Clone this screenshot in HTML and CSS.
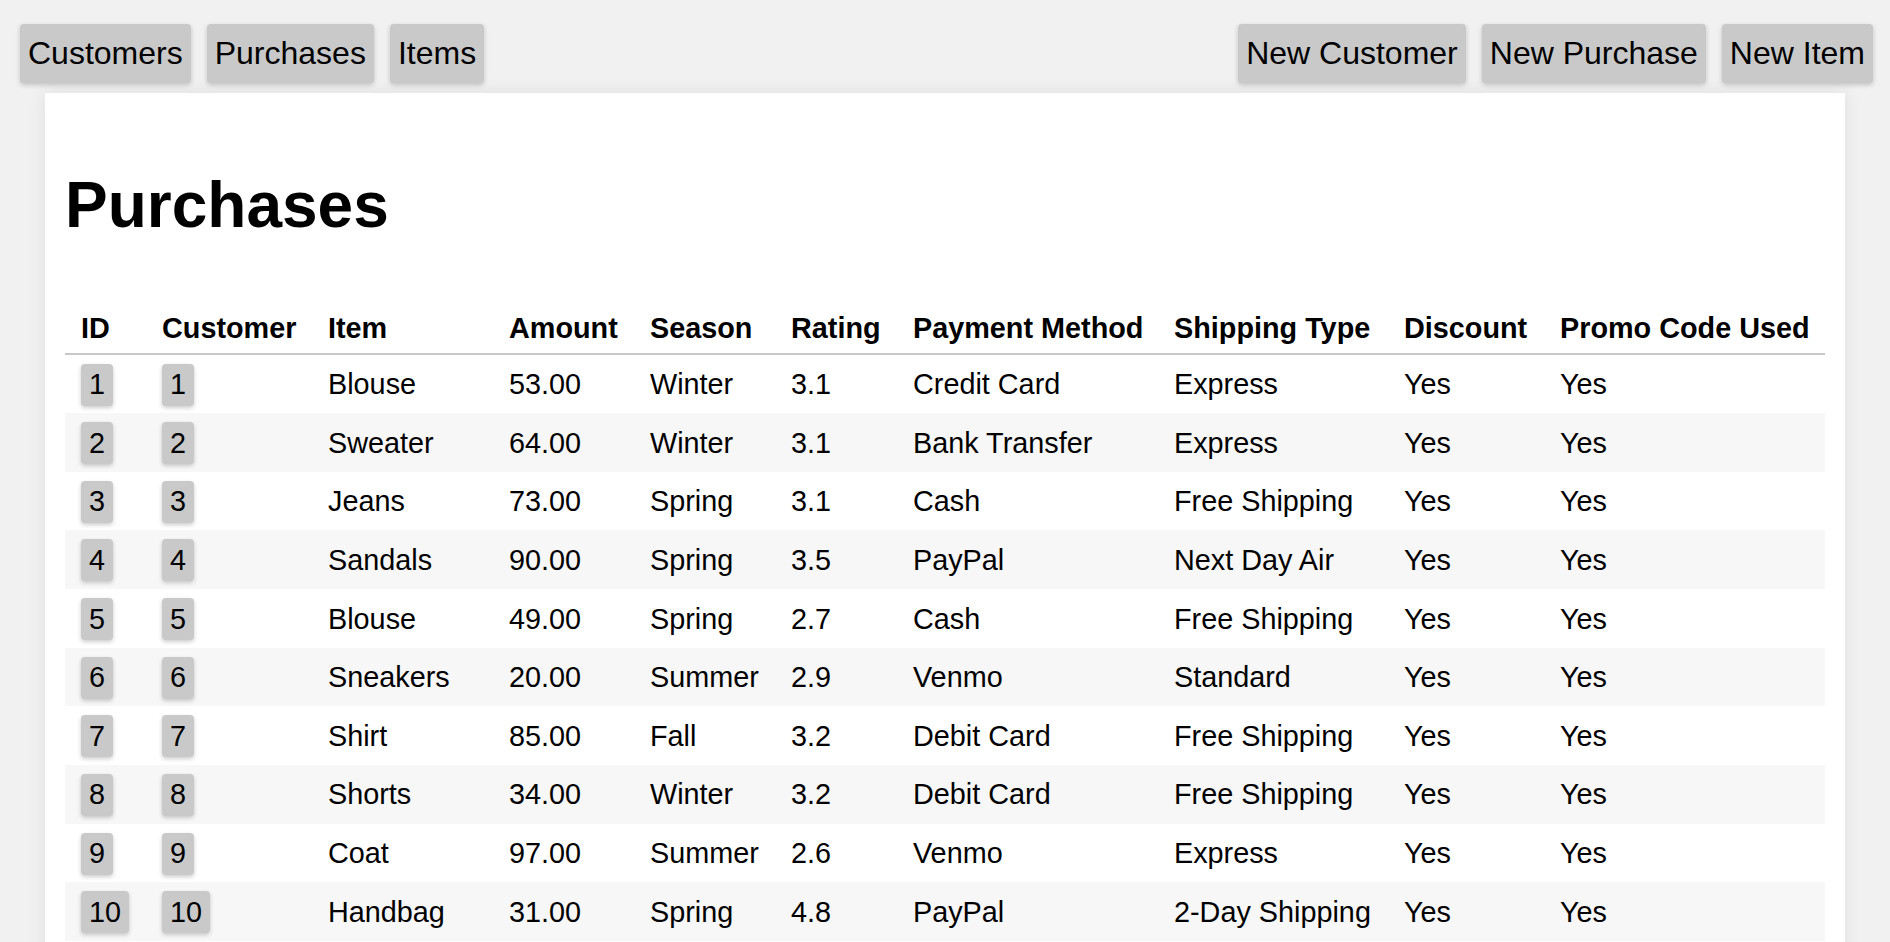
FILE: index.html
```html
<!DOCTYPE html>
<html lang="en">
<head>
<meta charset="utf-8">
<title>Purchases</title>
<link rel="stylesheet" href="styles.css">
</head>
<body>
<nav class="topbar">
  <div class="btn-group">
    <button class="btn">Customers</button>
    <button class="btn">Purchases</button>
    <button class="btn">Items</button>
  </div>
  <div class="btn-group">
    <button class="btn">New Customer</button>
    <button class="btn">New Purchase</button>
    <button class="btn">New Item</button>
  </div>
</nav>
<main class="panel">
  <h1 class="title">Purchases</h1>
  <table class="grid">
    <colgroup>
      <col class="c-id"><col class="c-cust"><col class="c-item"><col class="c-amount"><col class="c-season"><col class="c-rating"><col class="c-pay"><col class="c-ship"><col class="c-disc"><col class="c-promo">
    </colgroup>
    <thead>
      <tr><th>ID</th><th>Customer</th><th>Item</th><th>Amount</th><th>Season</th><th>Rating</th><th>Payment Method</th><th>Shipping Type</th><th>Discount</th><th>Promo Code Used</th></tr>
    </thead>
    <tbody>
      <tr><td><span class="badge">1</span></td><td><span class="badge">1</span></td><td>Blouse</td><td>53.00</td><td>Winter</td><td>3.1</td><td>Credit Card</td><td>Express</td><td>Yes</td><td>Yes</td></tr>
      <tr><td><span class="badge">2</span></td><td><span class="badge">2</span></td><td>Sweater</td><td>64.00</td><td>Winter</td><td>3.1</td><td>Bank Transfer</td><td>Express</td><td>Yes</td><td>Yes</td></tr>
      <tr><td><span class="badge">3</span></td><td><span class="badge">3</span></td><td>Jeans</td><td>73.00</td><td>Spring</td><td>3.1</td><td>Cash</td><td>Free Shipping</td><td>Yes</td><td>Yes</td></tr>
      <tr><td><span class="badge">4</span></td><td><span class="badge">4</span></td><td>Sandals</td><td>90.00</td><td>Spring</td><td>3.5</td><td>PayPal</td><td>Next Day Air</td><td>Yes</td><td>Yes</td></tr>
      <tr><td><span class="badge">5</span></td><td><span class="badge">5</span></td><td>Blouse</td><td>49.00</td><td>Spring</td><td>2.7</td><td>Cash</td><td>Free Shipping</td><td>Yes</td><td>Yes</td></tr>
      <tr><td><span class="badge">6</span></td><td><span class="badge">6</span></td><td>Sneakers</td><td>20.00</td><td>Summer</td><td>2.9</td><td>Venmo</td><td>Standard</td><td>Yes</td><td>Yes</td></tr>
      <tr><td><span class="badge">7</span></td><td><span class="badge">7</span></td><td>Shirt</td><td>85.00</td><td>Fall</td><td>3.2</td><td>Debit Card</td><td>Free Shipping</td><td>Yes</td><td>Yes</td></tr>
      <tr><td><span class="badge">8</span></td><td><span class="badge">8</span></td><td>Shorts</td><td>34.00</td><td>Winter</td><td>3.2</td><td>Debit Card</td><td>Free Shipping</td><td>Yes</td><td>Yes</td></tr>
      <tr><td><span class="badge">9</span></td><td><span class="badge">9</span></td><td>Coat</td><td>97.00</td><td>Summer</td><td>2.6</td><td>Venmo</td><td>Express</td><td>Yes</td><td>Yes</td></tr>
      <tr><td><span class="badge">10</span></td><td><span class="badge">10</span></td><td>Handbag</td><td>31.00</td><td>Spring</td><td>4.8</td><td>PayPal</td><td>2-Day Shipping</td><td>Yes</td><td>Yes</td></tr>
    </tbody>
  </table>
</main>
</body>
</html>
```

FILE: styles.css
```css
html, body {
  background: #f1f1f1;
}
body {
  margin: 8px;
  font-family: "Liberation Sans", Arial, sans-serif;
  color: #000;
}
.topbar {
  display: flex;
  justify-content: space-between;
  align-items: center;
  padding: 16px 9px 10px 12px;
}
.btn-group {
  display: flex;
  gap: 16px;
}
.btn {
  font-family: "Liberation Sans", Arial, sans-serif;
  font-size: 32px;
  line-height: 37px;
  padding: 11px 8px 11px 8px;
  background: #c9c9c9;
  color: #000;
  border: none;
  border-radius: 4px;
  box-shadow: 0 2px 5px rgba(0, 0, 0, 0.2);
  cursor: pointer;
}
.panel {
  max-width: 1800px;
  box-sizing: border-box;
  margin: 0 auto;
  background: #fff;
  padding: 32px 20px 32px 20px;
  box-shadow: 0 0 16px rgba(0, 0, 0, 0.08);
}
.title {
  font-size: 64px;
  font-weight: bold;
  margin: 43px 0 61.5px 0;
  line-height: normal;
}
.grid {
  width: 100%;
  border-collapse: collapse;
  table-layout: fixed;
  font-size: 28.8px;
}
.c-id { width: 81px; }
.c-cust { width: 166px; }
.c-item { width: 181px; }
.c-amount { width: 141px; }
.c-season { width: 141px; }
.c-rating { width: 122px; }
.c-pay { width: 261px; }
.c-ship { width: 230px; }
.c-disc { width: 156px; }
.grid th,
.grid td {
  text-align: left;
  padding: 9px 16px 7.65px 16px;
  white-space: nowrap;
}
.grid th {
  font-weight: bold;
  padding: 8px 16px;
  border-bottom: 2px solid #c8c8c8;
}
.grid tbody tr:nth-child(even) {
  background: #f7f7f7;
}
.badge {
  display: inline-block;
  background: #c9c9c9;
  padding: 4.5px 8px;
  border-radius: 4px;
  box-shadow: 0 2px 4px rgba(0, 0, 0, 0.2);
}
```
